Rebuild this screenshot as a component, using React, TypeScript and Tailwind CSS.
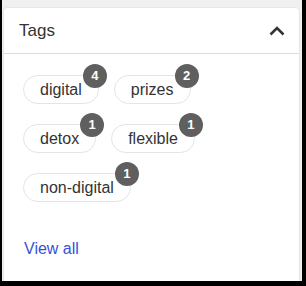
const TAGS = [
  { label: "digital", count: 4 },
  { label: "prizes", count: 2 },
  { label: "detox", count: 1 },
  { label: "flexible", count: 1 },
  { label: "non-digital", count: 1 },
];

export default function App() {
  return (
    <div
      className="w-[306px] h-[286px] bg-black pl-[2px] pr-[4px] pb-[5px] overflow-hidden"
      style={{ fontFamily: '"Liberation Sans", Arial, sans-serif' }}
    >
      <div className="h-full bg-[#f0f0f0] pt-[7px] pl-[1px] pr-[2px]">
        <div className="h-full bg-white rounded-t-[5px] border border-b-0 border-[#e6e6e6] flex flex-col">
          {/* Header */}
          <div className="h-[46px] flex items-center justify-between pl-[15px] pr-[14px] border-b border-[#dcdcdc]">
            <span className="text-[17px] text-[#333]">Tags</span>
            <svg width="16" height="10" viewBox="0 0 16 10" fill="none">
              <path d="M1.5 8.5 L8 2 L14.5 8.5" stroke="#333" strokeWidth="2.6" />
            </svg>
          </div>

          {/* Tag chips */}
          <div className="flex flex-wrap gap-x-[15px] gap-y-[20px] pl-[19px] pr-[60px] pt-[21px]">
            {TAGS.map((t) => (
              <div key={t.label} className="relative">
                <div className="h-[29px] px-[16px] flex items-center rounded-full border border-[#e4e4e4] text-[16px] text-[#333]">
                  {t.label}
                </div>
                <span className="absolute -top-[11px] -right-[8px] w-[24px] h-[24px] rounded-full bg-[#5f5f5f] text-white text-[13px] font-bold flex items-center justify-center">
                  {t.count}
                </span>
              </div>
            ))}
          </div>

          <div className="mt-auto pb-[20px] pl-[20px]">
            <a className="text-[16px] text-[#3552d6]">View all</a>
          </div>
        </div>
      </div>
    </div>
  );
}
